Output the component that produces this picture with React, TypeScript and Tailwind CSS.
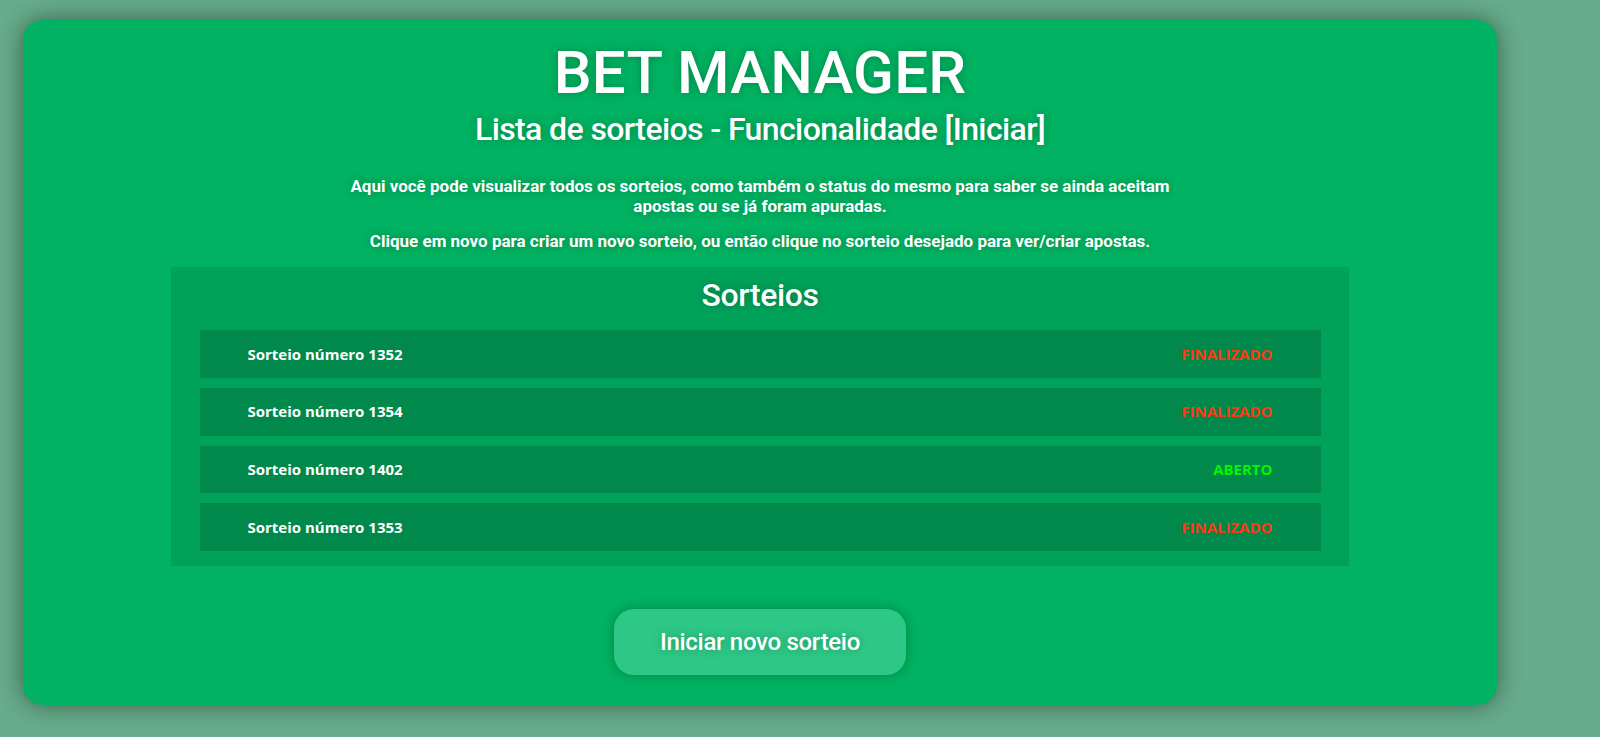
import React from 'react';

type Sorteio = {
  numero: number;
  status: 'FINALIZADO' | 'ABERTO';
};

const sorteios: Sorteio[] = [
  { numero: 1352, status: 'FINALIZADO' },
  { numero: 1354, status: 'FINALIZADO' },
  { numero: 1402, status: 'ABERTO' },
  { numero: 1353, status: 'FINALIZADO' },
];

const glow = '[text-shadow:0_0_10px_rgba(0,0,0,0.25)]';

export default function App() {
  return (
    <div className="min-h-[737px] w-full bg-[#67ac8c] pt-[20px] pl-[23px] font-['Roboto',sans-serif] text-white">
      <div className="flex w-[1474px] flex-col items-center rounded-[20px] bg-[#00b261] pt-[23px] pb-[30px] shadow-[0_0_24px_rgba(0,0,0,0.45)]">
        <h1 className={`text-[60px] leading-none font-medium tracking-[0.2px] ${glow}`}>BET MANAGER</h1>
        <h2 className={`mt-[10px] text-[32px] leading-none font-medium tracking-[-0.6px] ${glow}`}>
          Lista de sorteios - Funcionalidade [Iniciar]
        </h2>

        <p className={`mt-[31px] max-w-[850px] text-center text-[17px] leading-[20px] font-bold ${glow}`}>
          Aqui você pode visualizar todos os sorteios, como também o status do mesmo para saber se ainda aceitam
          apostas ou se já foram apuradas.
        </p>
        <p className={`mt-[15px] text-center text-[17px] leading-[20px] font-bold ${glow}`}>
          Clique em novo para criar um novo sorteio, ou então clique no sorteio desejado para ver/criar apostas.
        </p>

        {/* Lista */}
        <div className="mt-[16px] flex w-[1178px] flex-col items-center bg-[#00a259] pt-[12px] pb-[15px]">
          <h3 className={`text-[32px] leading-none font-medium tracking-[-0.4px] ${glow}`}>Sorteios</h3>
          <div className="mt-[19px] flex w-[1121px] flex-col gap-[10px] font-['Open_Sans',sans-serif]">
            {sorteios.map((s) => (
              <div
                key={s.numero}
                className="flex h-[47.75px] cursor-pointer items-center justify-between bg-[#00894a] px-12 text-[15px] font-bold"
              >
                <span>Sorteio número {s.numero}</span>
                <span className={s.status === 'ABERTO' ? 'text-[#00f500]' : 'text-[#ff3814]'}>{s.status}</span>
              </div>
            ))}
          </div>
        </div>

        <button
          className={`mt-[43px] flex h-[66px] w-[292px] items-center justify-center rounded-[20px] bg-[#2dc886] text-[24px] font-medium tracking-[-0.3px] shadow-[0_0_12px_rgba(0,0,0,0.25)] ${glow}`}
        >
          Iniciar novo sorteio
        </button>
      </div>
    </div>
  );
}
